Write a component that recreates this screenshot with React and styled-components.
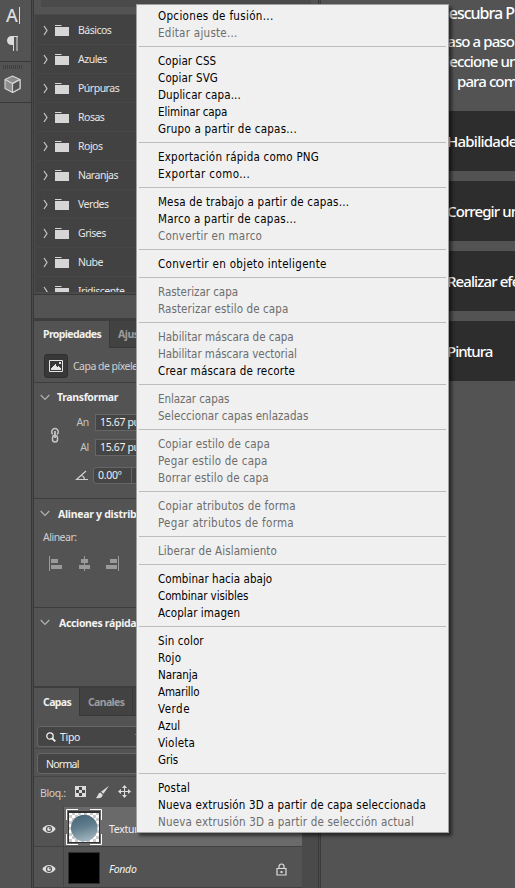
import React from "react";
import styled, { createGlobalStyle } from "styled-components";

const Global = createGlobalStyle`
  * { box-sizing: border-box; }
  body { margin: 0; background: #535353; overflow: hidden; }
`;

const uiFont = `"Noto Sans", "Open Sans", sans-serif`;

const Window = styled.div`
  position: relative;
  display: flex;
  width: 515px;
  height: 888px;
  overflow: hidden;
  background: #535353;
  color: #e6e6e6;
  font: 10.5px/16px ${uiFont};
  white-space: nowrap;
`;

/* ---------- tool dock ---------- */
const Dock = styled.div`
  flex: none;
  width: 34px;
  border-right: 1px solid #3a3a3a;
  background: linear-gradient(90deg, transparent 31px, #383838 31px, #383838 32px, #4a4a4a 32px);
`;
const DockGroup = styled.div`
  display: flex;
  flex-direction: column;
  width: 31px;
  height: ${(p) => p.$h}px;
  border-bottom: 1px solid #383838;
`;
const DockSvg = styled.svg`
  display: block;
  width: 31px;
  height: ${(p) => p.$h}px;
`;
const Grip = styled.div`
  width: 20px;
  height: 4px;
  margin: 3px 0 0 3px;
  background: repeating-linear-gradient(90deg, #3e3e3e 0 1px, #535353 1px 2px);
`;
const TypeTool = styled.div`
  display: flex;
  align-items: center;
  gap: 1px;
  height: 30px;
  padding-left: 6px;
  color: #dcdcdc;
  font: 500 18px/30px ${uiFont};
`;
const Caret = styled.span`
  width: 1px;
  height: 17px;
  background: #dcdcdc;
`;

/* ---------- panels ---------- */
const Panels = styled.div`
  flex: none;
  width: 287px;
  display: flex;
  flex-direction: column;
  border-right: 1px solid #3a3a3a;
  background: linear-gradient(90deg, #535353 284px, #383838 284px, #383838 285px, #4a4a4a 285px);
`;
const SwatchTop = styled.div`
  height: 15px;
  padding-left: 7px;
  width: 284px;
  border-bottom: 1px solid #4a4a4a;
`;
const SwatchStrip = styled.div`
  height: 7px;
  width: 270px;
  background: #4a4a4a;
`;
const SwatchList = styled.div`
  width: 284px;
  height: 277px;
  padding: 1px 0 0 2px;
  overflow: hidden;
  background: #424242;
  border-left: 1px solid #4c4c4c;
`;
const SwatchRow = styled.div`
  display: flex;
  align-items: center;
  height: 29px;
  padding: 1px 0 0 6px;
  border-bottom: 1px solid #474747;
`;
const SwatchName = styled.span`
  margin-left: 9px;
  letter-spacing: -0.5px;
`;
const SwatchFooter = styled.div`
  height: 29px;
  width: 284px;
  border-top: 2px solid #4a4a4a;
  border-bottom: 3px solid #3d3d3d;
  box-shadow: inset 0 1px #383838;
`;
const Tabs = styled.div`
  display: flex;
  height: ${(p) => p.$h}px;
  width: 284px;
  background: #424242;
`;
const Tab = styled.div`
  width: ${(p) => p.$w}px;
  padding: ${(p) => p.$top || 5}px 0 0 ${(p) => (p.$active ? 9 : 8)}px;
  font-weight: 700;
  letter-spacing: ${(p) => p.$ls || 0}px;
  border-right: 1px solid #383838;
  border-bottom: ${(p) => (p.$active ? "0" : "1px solid #383838")};
  color: ${(p) => (p.$active ? "#f0f0f0" : "#9c9c9c")};
  background: ${(p) => (p.$active ? "#535353" : "#424242")};
`;
const Section = styled.section`
  height: ${(p) => p.$h}px;
  width: 284px;
  border-bottom: ${(p) => p.$b || 1}px solid #3d3d3d;
`;
const KindRow = styled.div`
  display: flex;
  align-items: center;
  gap: 5px;
  padding: 6px 0 0 10px;
`;
const KindIcon = styled.div`
  display: grid;
  place-items: center;
  width: 24px;
  height: 24px;
  border: 1px solid #303030;
  border-radius: 3px;
  background: #383838;
`;
const Muted = styled.span`
  min-width: 30px;
  padding-top: 1px;
  color: #cfcfcf;
  letter-spacing: ${(p) => p.$ls || 0}px;
`;
const Head = styled.div`
  display: flex;
  align-items: center;
  height: 29px;
  padding-left: 6px;
  gap: ${(p) => p.$gap}px;
  font-weight: 700;
  color: #f2f2f2;
  letter-spacing: ${(p) => p.$ls || 0}px;
`;
const Transform = styled.div`
  display: grid;
  grid-template-columns: 15px auto;
  column-gap: 17px;
  padding: 2px 0 0 14px;
`;
const Fields = styled.div`
  display: flex;
  flex-direction: column;
  gap: 8px;
`;
const Labeled = styled.div`
  display: flex;
  align-items: center;
  height: 17px;
`;
const FieldLabel = styled.span`
  width: 9px;
  display: flex;
  justify-content: flex-end;
  margin-right: 6px;
  color: #c4c4c4;
  letter-spacing: -0.3px;
`;
const Box = styled.div`
  display: flex;
  align-items: center;
  width: ${(p) => p.$w || 80}px;
  height: 17px;
  padding-left: 4px;
  border: 1px solid #666;
  border-radius: ${(p) => p.$r || 0}px;
  background: #454545;
  color: #f0f0f0;
  letter-spacing: ${(p) => p.$ls || 0}px;
`;
const AngleRow = styled.div`
  display: flex;
  align-items: center;
  gap: 4px;
  height: 17px;
  margin: 11px 0 0 41px;
`;
const AngleValue = styled.span`
  width: 33px;
`;
const Divider = styled.span`
  width: 1px;
  height: 15px;
  background: #666;
`;
const AlignLabel = styled.div`
  padding: 1px 0 0 9px;
  color: #cfcfcf;
  letter-spacing: -0.5px;
`;
const AlignIcons = styled.svg`
  display: block;
  margin: 11px 0 0 15px;
`;
const FilterRow = styled.div`
  width: 284px;
  height: ${(p) => p.$h}px;
  padding: ${(p) => p.$top}px 0 0 3px;
  border-bottom: 1px solid #454545;
`;
const Select = styled.div`
  display: flex;
  align-items: center;
  gap: 4px;
  width: 130px;
  height: 21px;
  padding-left: 8px;
  border: 1px solid #666;
  border-radius: 3px;
  background: #454545;
  color: #f0f0f0;
  letter-spacing: ${(p) => p.$ls || 0}px;
`;
const SelectLabel = styled.span`
  width: 71px;
`;
const LockRow = styled.div`
  display: flex;
  align-items: center;
  height: 30px;
  padding-left: 6px;
`;
const Layer = styled.div`
  display: grid;
  grid-template-columns: 30px 238px 16px;
  height: ${(p) => p.$h}px;
  width: 284px;
  background: #4a4a4a;
`;
const EyeCell = styled.div`
  display: grid;
  place-items: center;
  padding-top: 4px;
  background: #535353;
  border-right: 1px solid #454545;
  border-bottom: 1px solid #424242;
`;
const LayerBody = styled.div`
  display: flex;
  align-items: center;
  padding-left: 2px;
  background: ${(p) => (p.$selected ? "#6a6a6a" : "#535353")};
  border-bottom: 1px solid #424242;
`;
const LayerName = styled.span`
  margin-left: 7px;
  flex: 1;
  color: #f0f0f0;
  padding-top: 4px;
  letter-spacing: -0.3px;
  font-style: ${(p) => (p.$italic ? "italic" : "normal")};
`;
const BlackThumb = styled.div`
  width: 32px;
  height: 32px;
  margin: 2px 2px 0 2px;
  border: 1px solid #303030;
  background: #000;
`;
const LockIcon = styled.svg`
  margin: 5px 15px 0 0;
`;

/* ---------- learn panel ---------- */
const Learn = styled.div`
  flex: 1;
  min-width: 0;
  overflow: hidden;
  color: #fff;
  font: 500 15px/20px ${uiFont};
`;
const LearnTitle = styled.div`
  height: 31px;
  padding: 3px 0 0 ${(p) => p.$x}px;
  font-size: 16px;
  letter-spacing: -1px;
`;
const LearnLine = styled.div`
  padding-left: ${(p) => p.$x}px;
  letter-spacing: -0.9px;
`;
const LearnCards = styled.div`
  display: flex;
  flex-direction: column;
  gap: 10px;
  margin-top: 20px;
`;
const LearnCard = styled.div`
  height: 60px;
  padding-left: 126px;
  line-height: 61px;
  background: #2d2d2d;
  letter-spacing: ${(p) => p.$ls}px;
`;

/* ---------- context menu ---------- */
const Menu = styled.div`
  position: absolute;
  left: 136px;
  top: 4px;
  width: 313px;
  height: 829px;
  padding: 2px;
  border: 1px solid #a0a0a0;
  background: #f0f0f0;
  box-shadow: 3px 3px 3px rgba(0, 0, 0, 0.5);
`;
const MenuItem = styled.div`
  height: 17px;
  padding-left: 19px;
  font: 11.5px/19px "DejaVu Sans Condensed", "DejaVu Sans", sans-serif;
  font-stretch: condensed;
  letter-spacing: ${(p) => p.$ls}px;
  color: ${(p) => (p.$off ? "#6d6d6d" : "#000")};
`;
const MenuRule = styled.div`
  height: 11px;
  background: linear-gradient(transparent 5px, #bcbcbc 5px, #bcbcbc 6px, transparent 6px);
`;

const swatches = ["Básicos", "Azules", "Púrpuras", "Rosas", "Rojos", "Naranjas", "Verdes", "Grises", "Nube", "Iridiscente"];

/* [label, tracking]; a leading "~" marks a disabled command. */
const menuGroups = [
  [["Opciones de fusión...", 0.33], ["~Editar ajuste...", 0.27]],
  [["Copiar CSS", 0.1], ["Copiar SVG", 0.15], ["Duplicar capa...", 0.1], ["Eliminar capa", -0.1], ["Grupo a partir de capas...", 0.24]],
  [["Exportación rápida como PNG", 0.23], ["Exportar como...", 0.4]],
  [["Mesa de trabajo a partir de capas…", 0.19], ["Marco a partir de capas...", 0.24], ["~Convertir en marco", 0.23]],
  [["Convertir en objeto inteligente", 0.32]],
  [["~Rasterizar capa", -0.03], ["~Rasterizar estilo de capa", 0.1]],
  [["~Habilitar máscara de capa", -0.02], ["~Habilitar máscara vectorial", -0.04], ["Crear máscara de recorte", 0.19]],
  [["~Enlazar capas", -0.05], ["~Seleccionar capas enlazadas", 0.05]],
  [["~Copiar estilo de capa", 0.13], ["~Pegar estilo de capa", 0.23], ["~Borrar estilo de capa", 0.13]],
  [["~Copiar atributos de forma", 0.18], ["~Pegar atributos de forma", 0.29]],
  [["~Liberar de Aislamiento", 0.1]],
  [["Combinar hacia abajo", 0.06], ["Combinar visibles", -0.1], ["Acoplar imagen", 0.08]],
  [["Sin color", 0.1], ["Rojo", 0.3], ["Naranja", -0.1], ["Amarillo", -0.15], ["Verde", 0.5], ["Azul", 0.1], ["Violeta", 0.2], ["Gris", -0.1]],
  [["Postal", 0.2], ["Nueva extrusión 3D a partir de capa seleccionada", 0.19], ["~Nueva extrusión 3D a partir de selección actual", 0.2]],
];

const FolderRowIcon = () => (
  <svg width="26" height="13" viewBox="0 0 26 13">
    <path d="M1 2l3 4.5L1 11" fill="none" stroke="#c8c8c8" strokeWidth="1.2" />
    <path d="M12 1h6l1 1H12zM12 3h14v9H12z" fill="#d6d6d6" />
  </svg>
);
const Down = () => (
  <svg width="10" height="7" viewBox="0 0 10 7">
    <path d="M.7 1L5 5.5 9.3 1" fill="none" stroke="#b4b4b4" strokeWidth="1.1" />
  </svg>
);
const Eye = () => (
  <svg width="14" height="10" viewBox="0 0 14 10">
    <path d="M.3 5C3.3-.2 10.7-.2 13.7 5 10.7 10.2 3.3 10.2.3 5z" fill="#dedede" />
    <circle cx="7" cy="5" r="3" fill="#4a4a4a" />
    <circle cx="7" cy="5" r="1.9" fill="#dedede" />
    <circle cx="7.8" cy="4.3" r=".8" fill="#4a4a4a" />
  </svg>
);

const LayerThumb = () => (
  <svg width="36" height="36" viewBox="0 0 36 36">
    <defs>
      <pattern id="checker" width="6" height="6" patternUnits="userSpaceOnUse" x="3" y="3">
        <path d="M0 0h6v6H0z" fill="#fff" />
        <path d="M3 0h3v3H3zM0 3h3v3H0z" fill="#ccc" />
      </pattern>
      <linearGradient id="orb" x1=".1" y1="0" x2=".35" y2="1">
        <stop offset="0" stopColor="#466473" />
        <stop offset=".5" stopColor="#5f7d8c" />
        <stop offset="1" stopColor="#9cb0ba" />
      </linearGradient>
    </defs>
    <path d="M2 2h32v32H2z" fill="#303030" />
    <path d="M3 4h30v29H3z" fill="url(#checker)" />
    <circle cx="18.2" cy="19" r="13.3" fill="url(#orb)" />
    <path d="M.5 11V.5H12M24 .5h11.5V11M35.5 25v10.500H24M12 35.500H.5V25" fill="none" stroke="#fff" />
  </svg>
);

export default function App() {
  return (
    <>
      <Global />
      <Window>
        <Dock>
          <DockGroup $h={62}>
            <TypeTool>A<Caret /></TypeTool>
            <DockSvg $h={30} viewBox="0 0 31 30">
              <path d="M18 6h-6.500a4.500 4.500 0 0 0 0 9H13v6h1V7h2.500v14h1V7h.5z" fill="#dcdcdc" />
            </DockSvg>
          </DockGroup>
          <DockGroup $h={41}>
            <Grip />
            <DockSvg $h={32} viewBox="0 0 31 32">
              <g fill="#8c8c8c" stroke="#d6d6d6" strokeWidth="1.1" strokeLinejoin="round">
                <path d="M12.500 7L20 10.500v9L12.500 23.500 5 19.500v-9z" />
                <path d="M12.500 14.500v9L20 19.500v-9z" fill="#535353" />
                <path d="M5 10.500l7.500 4 7.500-4M12.500 14.500v9" fill="none" />
              </g>
            </DockSvg>
          </DockGroup>
        </Dock>

        <Panels>
          <SwatchTop><SwatchStrip /></SwatchTop>
          <SwatchList>
            {swatches.map((s) => (
              <SwatchRow key={s}><FolderRowIcon /><SwatchName>{s}</SwatchName></SwatchRow>
            ))}
          </SwatchList>
          <SwatchFooter />

          <Tabs $h={27}>
            <Tab $w={76} $active $ls={-0.6}>Propiedades</Tab>
            <Tab $w={60} $ls={-0.45}>Ajustes</Tab>
          </Tabs>
          <Section $h={35}>
            <KindRow>
              <KindIcon>
                <svg width="14" height="12" viewBox="0 0 14 12">
                  <path d="M.5.5h13v11H.5z" fill="none" stroke="#e6e6e6" />
                  <path d="M2 10V8h1V7h1V6h1V5h1V4h1v2h1v1h1V6h1v1h1v1h1v2zM10 2h2v2h-2z" fill="#e6e6e6" />
                </svg>
              </KindIcon>
              <Muted $ls={-0.52}>Capa de píxeles</Muted>
            </KindRow>
          </Section>
          <Section $h={117}>
            <Head $gap={7} $ls={-0.35}><Down />Transformar</Head>
            <Transform>
              <svg width="14" height="41" viewBox="0 0 14 41">
                <g fill="none" stroke="#c4c4c4" strokeWidth="1.5">
                  <path d="M5 20.500a3.300 3.300 0 1 1 4 0" />
                  <rect x="4.5" y="21.5" width="5" height="6.5" rx="2.5" />
                  <path d="M7 17v7" strokeWidth="1.8" />
                </g>
              </svg>
              <Fields>
                <Labeled><FieldLabel>An</FieldLabel><Box $ls={-0.35}>15.67 pulg.</Box></Labeled>
                <Labeled><FieldLabel>Al</FieldLabel><Box $ls={-0.35}>15.67 pulg.</Box></Labeled>
              </Fields>
            </Transform>
            <AngleRow>
              <svg width="14" height="11" viewBox="0 0 14 11">
                <path d="M11 1L1.500 9.500H13M6.500 5.500q3 1 3 4" fill="none" stroke="#cfcfcf" strokeWidth="1.2" />
              </svg>
              <Box $w={70} $r={3} $ls={-0.3}><AngleValue>0.00º</AngleValue><Divider /></Box>
            </AngleRow>
          </Section>
          <Section $h={109}>
            <Head $gap={8} $ls={-0.28}><Down />Alinear y distribuir</Head>
            <AlignLabel>Alinear:</AlignLabel>
            <AlignIcons width="70" height="15" viewBox="0 0 70 15">
              <g fill="#9a9a9a">
                <path d="M0 0h1v15H0zM2 3h7v4H2zM2 9h11v4H2z" />
                <path d="M35 0h1v15h-1zM32 3h7v4h-7zM30 9h11v4H30z" />
                <path d="M69 0h1v15h-1zM61 3h7v4h-7zM57 9h11v4H57z" />
              </g>
            </AlignIcons>
          </Section>
          <Section $h={80} $b={2}>
            <Head $gap={9} $ls={-0.34}><Down />Acciones rápidas</Head>
          </Section>

          <Tabs $h={28}>
            <Tab $w={46} $top={6} $active $ls={-0.6}>Capas</Tab>
            <Tab $w={53} $top={6} $ls={-0.65}>Canales</Tab>
            <Tab $w={60} />
          </Tabs>
          <FilterRow $h={33} $top={10}>
            <Select $ls={-0.3}>
              <svg width="10" height="10" viewBox="0 0 10 10">
                <g fill="none" stroke="#f0f0f0">
                  <circle cx="4" cy="4" r="3.2" strokeWidth="1.3" />
                  <path d="M6.3 6.3L9.3 9.3" strokeWidth="1.9" />
                </g>
              </svg>
              <SelectLabel>Tipo</SelectLabel>
              <Down />
            </Select>
          </FilterRow>
          <FilterRow $h={28} $top={4}><Select $ls={-0.75}>Normal</Select></FilterRow>
          <LockRow>
            <Muted $ls={-0.4}>Bloq.:</Muted>
            <svg width="64" height="16" viewBox="0 -1 64 16">
              <g fill="#dcdcdc">
                <path d="M5 1h11v11H5z" />
                <path d="M9 2h3v3H9zM6 5h3v3H6zM12 5h3v3h-3zM9 8h3v3H9z" fill="#454545" />
                <path d="M39 .8l-5.500 8-2.500-2zM30.300 7.500l2.500 2.200c-.5 3-3.300 4.200-7 3.300 2.200-1 1.700-4.800 4.500-5.500z" />
                <path d="M54.500 0l2.500 3h-2v3h3V4l3 2.500-3 2.500V7h-3v3h2l-2.500 3-2.500-3h2V7h-3v2l-3-2.500 3-2.500v2h3V3h-2z" />
              </g>
            </svg>
          </LockRow>
          <Layer $h={40}>
            <EyeCell><Eye /></EyeCell>
            <LayerBody $selected><LayerThumb /><LayerName>Textura</LayerName></LayerBody>
          </Layer>
          <Layer $h={41}>
            <EyeCell><Eye /></EyeCell>
            <LayerBody>
              <BlackThumb />
              <LayerName $italic>Fondo</LayerName>
              <LockIcon width="11" height="13" viewBox="0 0 11 13">
                <path d="M1 5.500h9v6.500H1zM3 5.500V3.500a2.500 2.500 0 0 1 5 0v2" fill="none" stroke="#dcdcdc" strokeWidth="1.2" />
                <path d="M4.500 8h2v2h-2z" fill="#dcdcdc" />
              </LockIcon>
            </LayerBody>
          </Layer>
        </Panels>

        <Learn>
          <LearnTitle $x={117}>Descubra Photoshop</LearnTitle>
          <LearnLine $x={118}>Paso a paso</LearnLine>
          <LearnLine $x={110}>Seleccione un tema</LearnLine>
          <LearnLine $x={136}>para comenzar</LearnLine>
          <LearnCards>
            <LearnCard $ls={-0.75}>Habilidades</LearnCard>
            <LearnCard $ls={-0.9}>Corregir una foto</LearnCard>
            <LearnCard $ls={-0.9}>Realizar efectos</LearnCard>
            <LearnCard $ls={-1}>Pintura</LearnCard>
          </LearnCards>
        </Learn>

        <Menu>
          {menuGroups.map((group, i) => (
            <React.Fragment key={group[0][0]}>
              {i > 0 && <MenuRule />}
              {group.map(([label, tracking]) => (
                <MenuItem key={label} $off={label[0] === "~"} $ls={tracking}>{label.replace("~", "")}</MenuItem>
              ))}
            </React.Fragment>
          ))}
        </Menu>
      </Window>
    </>
  );
}
